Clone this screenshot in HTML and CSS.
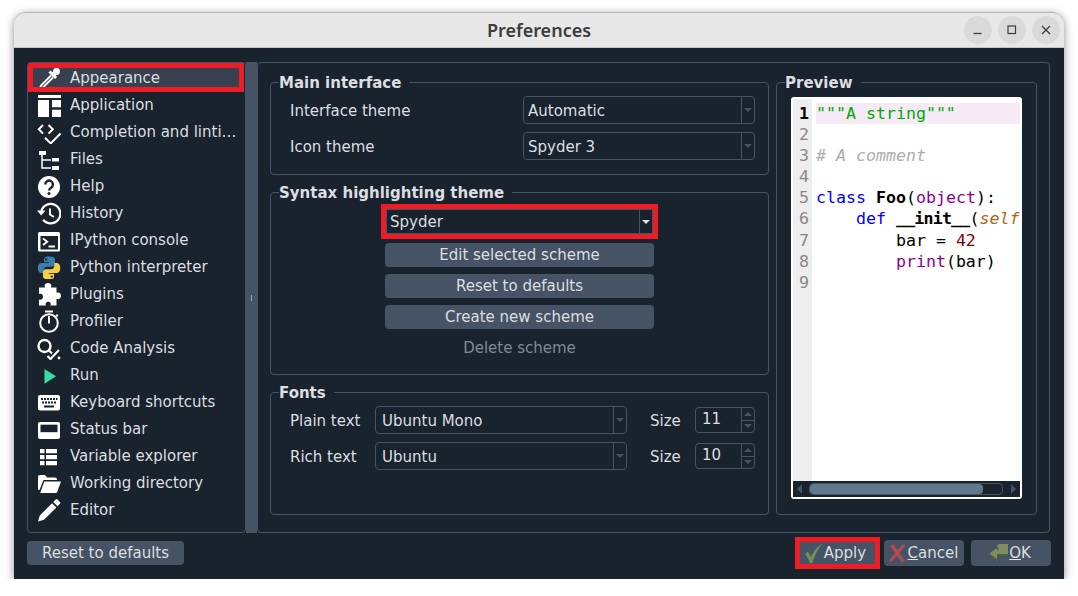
FILE: index.html
```html
<!DOCTYPE html>
<html>
  <head>
    <meta charset="utf-8">
    <title>Preferences</title>
    <link rel="stylesheet" href="styles.css">
  </head>
  <body>
    <div class="window">

      <div class="titlebar">
        <span></span>
        <span class="title">Preferences</span>
        <div class="winbtns">
          <span class="winbtn"><svg viewBox="0 0 28 28"><path d="M9.5 17.5h8" stroke="#3d3d3d" stroke-width="1.3"/></svg></span>
          <span class="winbtn"><svg viewBox="0 0 28 28"><rect x="10" y="10" width="7.5" height="7.5" fill="none" stroke="#3d3d3d" stroke-width="1.2"/></svg></span>
          <span class="winbtn"><svg viewBox="0 0 28 28"><path d="M10 10l8 8M18 10l-8 8" stroke="#3d3d3d" stroke-width="1.3"/></svg></span>
        </div>
      </div>

      <div class="content">
        <div class="main">

          <div class="sidebar">
            <div class="item item-sel">
              <svg class="ico" viewBox="0 0 24 24"><circle cx="19.500" cy="5.500" r="3.400" fill="#fff"/><path d="M15.500 9.500l3-3" stroke="#fff" stroke-width="5"/><path d="M12.500 5.500L19 12" stroke="#fff" stroke-width="3"/><path d="M14 9.500l-10 10-1.500 3.500 3.500-1.500 10-10" fill="none" stroke="#fff" stroke-width="1.800"/></svg>
              <span>Appearance</span>
            </div>
            <div class="item">
              <svg class="ico" viewBox="0 0 24 24"><path d="M1 2h23v3H1zM1 7h11v17H1zM15 7h9v7.300h-9zM15 16.700h9V24h-9z" fill="#fff"/></svg>
              <span>Application</span>
            </div>
            <div class="item">
              <svg class="ico" viewBox="0 0 24 24"><path d="M6 5L1.800 9.300 6 13.600M11.500 5l4.300 4.300-4.300 4.300M8 17.700l5.700 5.700L23.500 13.500" fill="none" stroke="#fff" stroke-width="2"/></svg>
              <span>Completion and linti…</span>
            </div>
            <div class="item">
              <svg class="ico" viewBox="0 0 24 24"><path d="M2 4h7v4H2zM15 11h7v3.500h-7zM15 19h7v4h-7z" fill="#fff"/><path d="M5 8v13h9M5 13h9" fill="none" stroke="#fff" stroke-width="1.500"/></svg>
              <span>Files</span>
            </div>
            <div class="item">
              <svg class="ico" viewBox="0 0 24 24"><circle cx="12" cy="13" r="11" fill="#fff"/><path d="M8.300 10.500a3.800 3.800 0 1 1 6 3c-1.500 1-2.200 1.500-2.200 3" fill="none" stroke="#19232d" stroke-width="2.400"/><circle cx="12" cy="19.500" r="1.500" fill="#19232d"/></svg>
              <span>Help</span>
            </div>
            <div class="item">
              <svg class="ico" viewBox="0 0 24 24"><path d="M4.300 10a9.700 9.700 0 1 1 1.800 8.800" fill="none" stroke="#fff" stroke-width="2.200"/><path d="M0 9.500h8.400l-4.200 5z" fill="#fff"/><path d="M13 7.500v6l4 2.500" fill="none" stroke="#fff" stroke-width="2"/></svg>
              <span>History</span>
            </div>
            <div class="item">
              <svg class="ico" viewBox="0 0 24 24"><rect x="1" y="4" width="22" height="19.500" rx="1.500" fill="#fff"/><rect x="3.500" y="8" width="17.500" height="13.500" fill="#19232d"/><path d="M6 10.500l4.300 3.200L6 17M11.500 18.500h6.500" fill="none" stroke="#fff" stroke-width="1.800"/></svg>
              <span>IPython console</span>
            </div>
            <div class="item">
              <svg class="ico" viewBox="0 0 24 24"><path fill-rule="evenodd" d="M12 1.500C7 1.500 7 3.700 7 4.500v2.700h5.300V8H4.500C2 8 .8 10 .8 13s1.200 5 3.500 5H6.700v-3c0-1.800 1.400-3.200 3.300-3.200h5c1.700 0 3-1.300 3-3V4.500c0-1.700-2-3-6-3zM9.200 3.300a1.100 1.100 0 1 1 0 2.200 1.100 1.100 0 0 1 0-2.200z" fill="#3d7cb0"/><path fill-rule="evenodd" d="M12 24.500c5 0 5-2.200 5-3v-2.700h-5.300V18h7.800c2.500 0 3.700-2 3.700-5s-1.200-5-3.500-5h-2.400v3c0 1.800-1.400 3.200-3.300 3.200H9c-1.700 0-3 1.300-3 3v4.300c0 1.700 2 3 6 3zM14.800 22.700a1.100 1.100 0 1 1 0-2.200 1.100 1.100 0 0 1 0 2.200z" fill="#f5cf4a"/></svg>
              <span>Python interpreter</span>
            </div>
            <div class="item">
              <svg class="ico" viewBox="0 0 24 24"><path d="M8 5.500c-1.300-3 1-4.500 3-4.500s4.300 1.500 3 4.500h5.500v5.300c3-1.300 4.500.8 4.500 3s-1.500 4.300-4.500 3v6.700h-6c1-2.500-.8-3.700-2.300-3.700s-3.300 1.200-2.300 3.700H2v-6c2.700 1 4-.8 4-2.700s-1.300-3.700-4-2.700V5.500z" fill="#fff"/></svg>
              <span>Plugins</span>
            </div>
            <div class="item">
              <svg class="ico" viewBox="0 0 24 24"><circle cx="12" cy="14" r="8.800" fill="none" stroke="#fff" stroke-width="2"/><path d="M8 1.500h8v2H8zM11 7h2v7.500h-2zM18.500 6.500l1.500-1.500 1.500 1.500-1.500 1.500z" fill="#fff"/></svg>
              <span>Profiler</span>
            </div>
            <div class="item">
              <svg class="ico" viewBox="0 0 24 24"><circle cx="7.500" cy="10" r="6" fill="none" stroke="#fff" stroke-width="2.400"/><path d="M12 14.500l3 3M10.500 20l3 3L22 14" fill="none" stroke="#fff" stroke-width="2.200"/><circle cx="22" cy="22" r="1.400" fill="#fff"/></svg>
              <span>Code Analysis</span>
            </div>
            <div class="item">
              <svg class="ico" viewBox="0 0 24 24"><path d="M7.500 6L19 13.300 7.500 20.800z" fill="#38dba7"/></svg>
              <span>Run</span>
            </div>
            <div class="item">
              <svg class="ico" viewBox="0 0 24 24"><rect x="1" y="5" width="22" height="15.500" rx="2" fill="#fff"/><path d="M4 8h2v2H4zM7 8h2v2H7zM10 8h2v2h-2zM13 8h2v2h-2zM16 8h2v2h-2zM19 8h1.500v2H19zM5 11.500h2v2H5zM8 11.500h2v2H8zM11 11.500h2v2h-2zM14 11.500h2v2h-2zM17 11.500h2v2h-2zM7 15.500h10v2H7z" fill="#19232d"/></svg>
              <span>Keyboard shortcuts</span>
            </div>
            <div class="item">
              <svg class="ico" viewBox="0 0 24 24"><rect x="1" y="5" width="22" height="17" rx="2" fill="#fff"/><rect x="3.500" y="7.700" width="17" height="7.500" fill="#19232d"/></svg>
              <span>Status bar</span>
            </div>
            <div class="item">
              <svg class="ico" viewBox="0 0 24 24"><path d="M3 5h4.500v4.300H3zM9 5h11v4.300H9zM3 11h4.500v4.300H3zM9 11h11v4.300H9zM3 17h4.500v4.300H3zM9 17h11v4.300H9z" fill="#fff"/></svg>
              <span>Variable explorer</span>
            </div>
            <div class="item">
              <svg class="ico" viewBox="0 0 24 24"><path d="M1 6c0-1.200.8-2 2-2h5l2 2.500h8c1.200 0 2 .8 2 2v.5H6.500L2.500 19H2c-.6 0-1-.5-1-1z" fill="#fff"/><path d="M7.300 10.500H24l-3.800 10.500c-.3.700-1 1-1.700 1H3.200z" fill="#fff"/></svg>
              <span>Working directory</span>
            </div>
            <div class="item">
              <svg class="ico" viewBox="0 0 24 24"><path d="M1 23.500l1.800-6L15 5.300l4.300 4.300L7 21.800zM16.300 4l2.700-2.700c.4-.3.800-.3 1.200 0l3 3c.3.400.3.800 0 1.200L20.500 8.300z" fill="#fff"/></svg>
              <span>Editor</span>
            </div>
          </div>

          <div class="splitter"><span class="splitter-tick"></span></div>

          <div class="tabpanel">
            <div class="col-left">

              <fieldset class="group">
                <legend>Main interface</legend>
                <div class="rows">
                  <div class="row">
                    <span class="lbl lbl-wide">Interface theme</span>
                    <div class="combo combo-theme"><span class="combo-text">Automatic</span><span class="combo-arrow"><i></i></span></div>
                  </div>
                  <div class="row">
                    <span class="lbl lbl-wide">Icon theme</span>
                    <div class="combo combo-theme"><span class="combo-text">Spyder 3</span><span class="combo-arrow"><i></i></span></div>
                  </div>
                </div>
              </fieldset>

              <fieldset class="group">
                <legend>Syntax highlighting theme</legend>
                <div class="scheme">
                  <div class="combo combo-scheme"><span class="combo-text">Spyder</span><span class="combo-arrow arrow-on"><i></i></span></div>
                  <button class="btn">Edit selected scheme</button>
                  <button class="btn">Reset to defaults</button>
                  <button class="btn">Create new scheme</button>
                  <span class="btn-off">Delete scheme</span>
                </div>
              </fieldset>

              <fieldset class="group group-fill">
                <legend>Fonts</legend>
                <div class="rows">
                  <div class="row">
                    <span class="lbl lbl-font">Plain text</span>
                    <div class="combo combo-font"><span class="combo-text">Ubuntu Mono</span><span class="combo-arrow"><i></i></span></div>
                    <span class="lbl lbl-size">Size</span>
                    <div class="spin"><span class="spin-val">11</span><span class="spin-btns"><b><i class="up"></i></b><b><i></i></b></span></div>
                  </div>
                  <div class="row">
                    <span class="lbl lbl-font">Rich text</span>
                    <div class="combo combo-font"><span class="combo-text">Ubuntu</span><span class="combo-arrow"><i></i></span></div>
                    <span class="lbl lbl-size">Size</span>
                    <div class="spin"><span class="spin-val">10</span><span class="spin-btns"><b><i class="up"></i></b><b><i></i></b></span></div>
                  </div>
                </div>
              </fieldset>

            </div>

            <fieldset class="group group-preview">
              <legend>Preview</legend>
              <div class="editor">
                <div class="editor-body">
                  <div class="gutter">
                    <div class="num-cur">1</div><div>2</div><div>3</div><div>4</div><div>5</div><div>6</div><div>7</div><div>8</div><div>9</div>
                  </div>
                  <div class="code">
                    <div class="cur-line"><span class="c-str">"""A string"""</span></div>
                    <div>&nbsp;</div>
                    <div><span class="c-com"># A comment</span></div>
                    <div>&nbsp;</div>
                    <div><span class="c-kw">class</span> <b>Foo</b>(<span class="c-blt">object</span>):</div>
                    <div>    <span class="c-kw">def</span> <b class="c-init">__init__</b>(<span class="c-self">self</span></div>
                    <div>        bar = <span class="c-num">42</span></div>
                    <div>        <span class="c-blt">print</span>(bar)</div>
                    <div>&nbsp;</div>
                  </div>
                </div>
                <div class="hscroll">
                  <span class="tri-left"></span>
                  <div class="hscroll-track"><div class="hscroll-thumb"></div></div>
                  <span class="tri-right"></span>
                </div>
              </div>
            </fieldset>
          </div>
        </div>

        <div class="footer">
          <button class="btn btn-reset">Reset to defaults</button>
          <div class="footer-right">
            <button class="btn btn-dlg btn-apply">
              <svg class="dlg-ico" viewBox="0 0 20 20"><path d="M1 11l3-2.500 3 5.500C9.500 8.500 13 3.500 19 0c-4.500 5-8 11-10.500 20H6C4.800 16.500 3 13.500 1 11z" fill="#6f8f55"/></svg>
              <span>Apply</span>
            </button>
            <button class="btn btn-dlg">
              <svg class="dlg-ico" viewBox="0 0 20 20"><path d="M2 3l3-2 4.500 6L15 1l2.500 1.500-6 7.500 5.500 8-3.500 1.500L9 12.500 4 19l-3-1.500L7 10z" fill="#ad4a54"/></svg>
              <span><u>C</u>ancel</span>
            </button>
            <button class="btn btn-dlg">
              <svg class="dlg-ico" viewBox="0 0 20 20"><path d="M8 3l2-2h9v10l-2 2H9v6l-8-7v-2l7-5v2h2z" fill="#7f8f5c"/><path d="M19 11l-2 2H9v6l-8-7v-1l7 5v-5h9z" fill="#4f5d38"/></svg>
              <span><u>O</u>K</span>
            </button>
          </div>
        </div>
      </div>
    </div>
  </body>
</html>
```

FILE: styles.css
```css
body {
  margin: 0;
  background-color: #ffffff;
  color: #dcdee0;
  font-family: "DejaVu Sans", sans-serif;
  font-size: 15px;
  overflow: hidden;
}

.window {
  display: flex;
  flex-direction: column;
  width: 1050px;
  height: 567px;
  margin: 12px 0 0 14px;
  border-radius: 12px 12px 0 0;
  box-shadow: 0 2px 9px rgba(0, 0, 0, 0.45);
}

.titlebar {
  display: grid;
  grid-template-columns: 1fr auto 1fr;
  align-items: center;
  height: 36px;
  padding: 0 4px;
  box-sizing: border-box;
  border-radius: 12px 12px 0 0;
  background-color: #e8e8e8;
  border-top: 1px solid #b4b4b4;
  border-bottom: 1px solid #c4c4c4;
}

.title {
  font-family: "Noto Sans", sans-serif;
  font-weight: 600;
  font-size: 18px;
  color: #3d3d3d;
}

.winbtns {
  display: flex;
  justify-content: flex-end;
  gap: 6px;
}

.winbtn {
  width: 28px;
  height: 28px;
  border-radius: 50%;
  background-color: #dadada;
}

.winbtn svg {
  display: block;
}

.content {
  flex: 1;
  display: flex;
  flex-direction: column;
  padding: 14px 14px 0 13px;
  background-color: #19232d;
}

.main {
  display: flex;
  height: 471px;
}

/* left list */
.sidebar {
  width: 219px;
  box-sizing: border-box;
  padding: 1px 1px 0 1px;
  border: 1px solid #455364;
  border-radius: 4px;
}

.item {
  display: flex;
  align-items: center;
  gap: 9px;
  height: 27px;
  padding-left: 8px;
  margin-right: 1px;
  white-space: nowrap;
}

.item-sel {
  background-color: #37414f;
  outline: 5px solid #ee1c25;
  outline-offset: -4px;
}

.ico {
  flex: none;
  width: 24px;
  height: 24px;
}

.splitter {
  display: flex;
  align-items: center;
  justify-content: center;
  width: 11px;
  background-color: #455364;
}

.splitter-tick {
  width: 1px;
  height: 6px;
  margin-top: 1px;
  background-color: #9aa5b1;
}

.tabpanel {
  flex: 1;
  display: flex;
  gap: 7px;
  padding: 9px 0 17px 12px;
  border: 1px solid #455364;
  border-radius: 4px;
}

.col-left {
  display: flex;
  flex-direction: column;
  gap: 7px;
  width: 499px;
}

/* group boxes */
.group {
  margin: 0;
  padding: 4px 13px 14px 19px;
  min-width: 0;
  border: 1px solid #455364;
  border-radius: 4px;
}

.group legend {
  margin-left: -11px;
  padding: 0 8px 0 0;
  height: 20px;
  line-height: 23px;
  font-weight: bold;
}

.group-fill {
  flex: 1;
}

.group-preview {
  width: 261px;
  box-sizing: border-box;
  padding: 5px 14px 14px 14px;
}

.group-preview legend {
  margin-left: -6px;
}

.rows {
  display: flex;
  flex-direction: column;
  gap: 8px;
}

.row {
  display: flex;
  align-items: center;
  height: 28px;
}

.lbl {
  padding-top: 1px;
}

.lbl-wide {
  width: 233px;
}

.lbl-font {
  width: 85px;
}

.lbl-size {
  width: 45px;
  margin-left: 23px;
}

/* combo boxes */
.combo {
  display: flex;
  align-items: stretch;
  box-sizing: border-box;
  border: 1px solid #455364;
  border-radius: 4px;
}

.combo-theme {
  width: 232px;
  height: 28px;
}

.combo-font {
  width: 252px;
  height: 28px;
}

.combo-font .combo-text {
  padding-left: 6px;
}

.combo-text {
  flex: 1;
  align-self: center;
  padding: 1px 0 0 4px;
}

.combo-arrow {
  display: flex;
  align-items: center;
  justify-content: center;
  width: 12px;
  border-left: 1px solid #455364;
}

.combo-arrow i {
  border-left: 4px solid transparent;
  border-right: 4px solid transparent;
  border-top: 4px solid #455364;
}

.combo-arrow.arrow-on i {
  border-top-color: #e0e1e3;
}

.scheme {
  display: flex;
  flex-direction: column;
  align-items: center;
  width: 269px;
  margin: 3px auto 0;
  position: relative;
  left: -3px;
}

.combo-scheme {
  width: 267px;
  height: 25px;
  margin-bottom: 9px;
  border-radius: 0;
  outline: 5px solid #ee1c25;
}

.combo-scheme .combo-text {
  padding-left: 3px;
}

.combo-scheme .combo-arrow {
  width: 12px;
}

.btn {
  display: block;
  width: 269px;
  height: 24px;
  padding: 0;
  margin-bottom: 7px;
  border: none;
  border-radius: 4px;
  background-color: #455364;
  color: #dcdee0;
  font-family: inherit;
  font-size: inherit;
}

.btn-off {
  line-height: 24px;
  color: #7f8a96;
}

/* spin boxes */
.spin {
  display: flex;
  box-sizing: border-box;
  width: 60px;
  height: 26px;
  border: 1px solid #455364;
  border-radius: 4px;
}

.spin-val {
  flex: 1;
  padding-left: 6px;
  line-height: 22px;
}

.spin-btns {
  display: flex;
  flex-direction: column;
  width: 12px;
  border-left: 1px solid #455364;
}

.spin-btns b {
  flex: 1;
  display: flex;
  align-items: center;
  justify-content: center;
}

.spin-btns b + b {
  border-top: 1px solid #455364;
}

.spin-btns i {
  border-left: 4px solid transparent;
  border-right: 4px solid transparent;
  border-top: 4px solid #455364;
}

.spin-btns i.up {
  border-top: none;
  border-bottom: 4px solid #455364;
}

/* preview editor */
.editor {
  display: flex;
  flex-direction: column;
  width: 231px;
  height: 402px;
  box-sizing: border-box;
  padding: 2px;
  border-radius: 3px;
  background-color: #ffffff;
  overflow: hidden;
}

.editor-body {
  flex: 1;
  display: flex;
  min-height: 0;
  font-family: "DejaVu Sans Mono", monospace;
  font-size: 16.6px;
  line-height: 21.1px;
  color: #000000;
}

.gutter {
  flex: none;
  width: 19px;
  box-sizing: border-box;
  padding: 4px 3px 0 0;
  text-align: right;
  background-color: #eeeeee;
  color: #888888;
}

.num-cur {
  color: #000000;
  font-weight: bold;
}

.code {
  flex: 1;
  min-width: 0;
  margin-left: 4px;
  padding-top: 4px;
  overflow: hidden;
}

.code div {
  white-space: pre;
}

.cur-line {
  background-color: #f6eaf7;
}

.c-str { color: #00aa00; }
.c-com { color: #adadad; font-style: italic; }
.c-kw { color: #0000ff; }
.c-blt { color: #900090; }
.c-num { color: #800000; }
.c-self { color: #b0661c; font-style: italic; }
.c-init { letter-spacing: -0.8px; }

.hscroll {
  display: flex;
  align-items: center;
  flex: none;
  height: 16px;
  box-sizing: border-box;
  padding: 0 4px;
  gap: 4px;
  background-color: #19232d;
}

.hscroll-track {
  flex: 1;
  height: 12px;
  box-sizing: border-box;
  border: 1px solid #455364;
  border-radius: 4px;
}

.hscroll-thumb {
  width: 173px;
  height: 100%;
  border-radius: 4px;
  background-color: #60798b;
}

.tri-left {
  border-top: 5px solid transparent;
  border-bottom: 5px solid transparent;
  border-right: 5px solid #455364;
  margin-right: 3px;
}

.tri-right {
  border-top: 5px solid transparent;
  border-bottom: 5px solid transparent;
  border-left: 5px solid #455364;
  margin-left: 4px;
}

/* bottom buttons */
.footer {
  display: flex;
  justify-content: space-between;
  align-items: center;
  height: 26px;
  margin-top: 7px;
}

.footer .btn {
  margin-bottom: 0;
}

.btn-reset {
  width: 157px;
  height: 24px;
}

.footer-right {
  display: flex;
  align-items: center;
  margin-right: -1px;
}

.btn-dlg {
  display: flex;
  align-items: center;
  justify-content: center;
  width: 80px;
  height: 26px;
  padding-right: 2px;
  margin-left: 7px;
}

.btn-apply {
  width: 75px;
  height: 22px;
  margin-right: 2px;
  padding-right: 5px;
  border-radius: 0;
  outline: 5px solid #ee1c25;
}

.dlg-ico {
  flex: none;
  width: 20px;
  height: 20px;
}
```
